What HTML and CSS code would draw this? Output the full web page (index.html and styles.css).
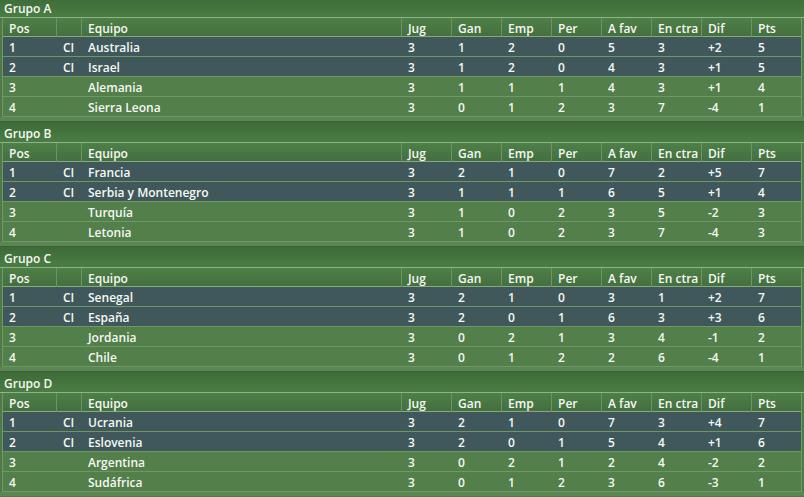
FILE: index.html
```html
<!DOCTYPE html>
<html lang="es">
<head>
<meta charset="utf-8">
<title>Grupos</title>
<link rel="stylesheet" href="styles.css">
</head>
<body>
<div class="page">

<section class="group">
  <div class="gtitle">Grupo A</div>
  <div class="table">
    <div class="row head"><div>Pos</div><div></div><div>Equipo</div><div>Jug</div><div>Gan</div><div>Emp</div><div>Per</div><div>A fav</div><div>En ctra</div><div>Dif</div><div>Pts</div></div>
    <div class="row q"><div>1</div><div>CI</div><div>Australia</div><div>3</div><div>1</div><div>2</div><div>0</div><div>5</div><div>3</div><div>+2</div><div>5</div></div>
    <div class="row q"><div>2</div><div>CI</div><div>Israel</div><div>3</div><div>1</div><div>2</div><div>0</div><div>4</div><div>3</div><div>+1</div><div>5</div></div>
    <div class="row"><div>3</div><div></div><div>Alemania</div><div>3</div><div>1</div><div>1</div><div>1</div><div>4</div><div>3</div><div>+1</div><div>4</div></div>
    <div class="row"><div>4</div><div></div><div>Sierra Leona</div><div>3</div><div>0</div><div>1</div><div>2</div><div>3</div><div>7</div><div>-4</div><div>1</div></div>
  </div>
  <div class="spacer"></div>
</section>

<section class="group">
  <div class="gtitle">Grupo B</div>
  <div class="table">
    <div class="row head"><div>Pos</div><div></div><div>Equipo</div><div>Jug</div><div>Gan</div><div>Emp</div><div>Per</div><div>A fav</div><div>En ctra</div><div>Dif</div><div>Pts</div></div>
    <div class="row q"><div>1</div><div>CI</div><div>Francia</div><div>3</div><div>2</div><div>1</div><div>0</div><div>7</div><div>2</div><div>+5</div><div>7</div></div>
    <div class="row q"><div>2</div><div>CI</div><div>Serbia y Montenegro</div><div>3</div><div>1</div><div>1</div><div>1</div><div>6</div><div>5</div><div>+1</div><div>4</div></div>
    <div class="row"><div>3</div><div></div><div>Turquía</div><div>3</div><div>1</div><div>0</div><div>2</div><div>3</div><div>5</div><div>-2</div><div>3</div></div>
    <div class="row"><div>4</div><div></div><div>Letonia</div><div>3</div><div>1</div><div>0</div><div>2</div><div>3</div><div>7</div><div>-4</div><div>3</div></div>
  </div>
  <div class="spacer"></div>
</section>

<section class="group">
  <div class="gtitle">Grupo C</div>
  <div class="table">
    <div class="row head"><div>Pos</div><div></div><div>Equipo</div><div>Jug</div><div>Gan</div><div>Emp</div><div>Per</div><div>A fav</div><div>En ctra</div><div>Dif</div><div>Pts</div></div>
    <div class="row q"><div>1</div><div>CI</div><div>Senegal</div><div>3</div><div>2</div><div>1</div><div>0</div><div>3</div><div>1</div><div>+2</div><div>7</div></div>
    <div class="row q"><div>2</div><div>CI</div><div>España</div><div>3</div><div>2</div><div>0</div><div>1</div><div>6</div><div>3</div><div>+3</div><div>6</div></div>
    <div class="row"><div>3</div><div></div><div>Jordania</div><div>3</div><div>0</div><div>2</div><div>1</div><div>3</div><div>4</div><div>-1</div><div>2</div></div>
    <div class="row"><div>4</div><div></div><div>Chile</div><div>3</div><div>0</div><div>1</div><div>2</div><div>2</div><div>6</div><div>-4</div><div>1</div></div>
  </div>
  <div class="spacer"></div>
</section>

<section class="group">
  <div class="gtitle">Grupo D</div>
  <div class="table">
    <div class="row head"><div>Pos</div><div></div><div>Equipo</div><div>Jug</div><div>Gan</div><div>Emp</div><div>Per</div><div>A fav</div><div>En ctra</div><div>Dif</div><div>Pts</div></div>
    <div class="row q"><div>1</div><div>CI</div><div>Ucrania</div><div>3</div><div>2</div><div>1</div><div>0</div><div>7</div><div>3</div><div>+4</div><div>7</div></div>
    <div class="row q"><div>2</div><div>CI</div><div>Eslovenia</div><div>3</div><div>2</div><div>0</div><div>1</div><div>5</div><div>4</div><div>+1</div><div>6</div></div>
    <div class="row"><div>3</div><div></div><div>Argentina</div><div>3</div><div>0</div><div>2</div><div>1</div><div>2</div><div>4</div><div>-2</div><div>2</div></div>
    <div class="row"><div>4</div><div></div><div>Sudáfrica</div><div>3</div><div>0</div><div>1</div><div>2</div><div>3</div><div>6</div><div>-3</div><div>1</div></div>
  </div>
  <div class="spacer"></div>
</section>

</div>
</body>
</html>
```

FILE: styles.css
```css
html, body {
  margin: 0;
  padding: 0;
  background: #4f7a47;
  overflow: hidden;
}

body {
  font-family: "Open Sans", "DejaVu Sans", sans-serif;
  font-size: 12px;
  font-weight: 600;
  color: #f6f8f4;
}

.page {
  width: 804px;
  margin-top: -4px;
}

.group {
  display: flex;
  flex-direction: column;
}

.gtitle {
  height: 22px;
  box-sizing: border-box;
  border-top: 1px solid #3b6236;
  border-bottom: 1px solid #8fb389;
  background: linear-gradient(#3d6b38, #4a7d43);
  padding-left: 4px;
  display: flex;
  align-items: center;
  padding-top: 2px;
}

.table {
  margin: 0 2px;
  border-left: 1px solid #6f9a66;
  border-right: 1px solid #6f9a66;
}

.row {
  display: grid;
  grid-template-columns: 54px 25px 320px repeat(8, 50px);
  height: 20px;
  box-sizing: border-box;
  border-bottom: 1px solid #6d9863;
  background: #527f4a;
}

.row > div {
  padding-left: 6px;
  padding-top: 2px;
  display: flex;
  align-items: center;
  white-space: nowrap;
}

.row.head {
  height: 19px;
  background: linear-gradient(#4e8048, #446f3f);
  border-bottom: 1px solid #85ab7f;
}

.row.head > div {
  border-right: 1px solid #6b9562;
}

.row.head > div:last-child {
  border-right: none;
}

.row.q {
  background: #40585b;
}

.spacer {
  height: 4px;
  background: #5b8653;
}
```
